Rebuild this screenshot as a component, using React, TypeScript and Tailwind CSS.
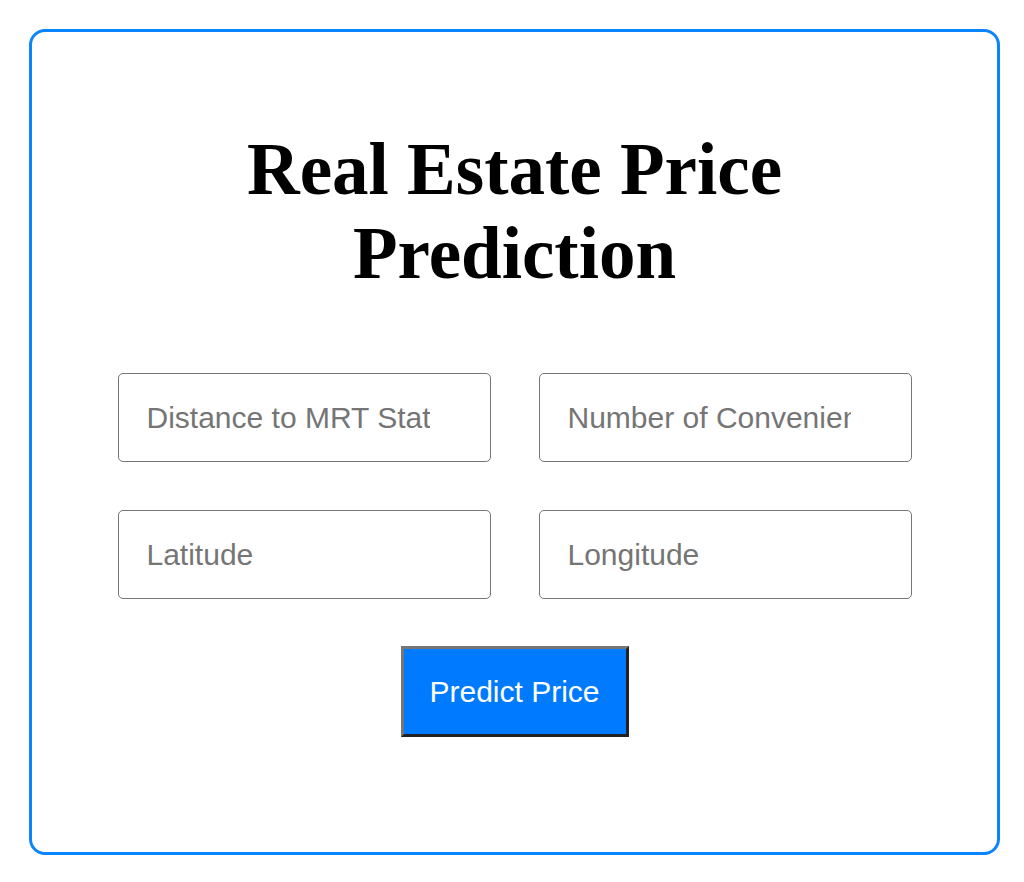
export default function App() {
    return (
        <div className="bg-white min-h-[882px] pt-[29px] pl-[29px]">
            <div className="w-[971px] h-[826px] border-[3px] border-[#0a84ff] rounded-[16px] flex flex-col items-center pt-[96px]">
                <h1 className="font-['Liberation_Serif',serif] font-bold text-[73px] leading-[84px] text-black text-center w-[600px]">
                    Real Estate Price Prediction
                </h1>
                <div className="grid grid-cols-2 gap-x-[48px] gap-y-[48px] mt-[77px]">
                    <input
                        type="text"
                        placeholder="Distance to MRT Station"
                        className="w-[373px] h-[89px] pl-[28px] pr-[60px] border border-[#767676] rounded-[5px] font-['Liberation_Sans',Arial,sans-serif] text-[30px] text-black placeholder:text-[#757575] outline-none"
                    />
                    <input
                        type="text"
                        placeholder="Number of Convenience Stores"
                        className="w-[373px] h-[89px] pl-[28px] pr-[60px] border border-[#767676] rounded-[5px] font-['Liberation_Sans',Arial,sans-serif] text-[30px] text-black placeholder:text-[#757575] outline-none"
                    />
                    <input
                        type="text"
                        placeholder="Latitude"
                        className="w-[373px] h-[89px] pl-[28px] pr-[60px] border border-[#767676] rounded-[5px] font-['Liberation_Sans',Arial,sans-serif] text-[30px] text-black placeholder:text-[#757575] outline-none"
                    />
                    <input
                        type="text"
                        placeholder="Longitude"
                        className="w-[373px] h-[89px] pl-[28px] pr-[60px] border border-[#767676] rounded-[5px] font-['Liberation_Sans',Arial,sans-serif] text-[30px] text-black placeholder:text-[#757575] outline-none"
                    />
                </div>
                <button
                    type="button"
                    className="mt-[47px] w-[228px] h-[91px] bg-[#007bff] text-white font-['Liberation_Sans',Arial,sans-serif] text-[30px] border-[3px] border-t-[#767676] border-l-[#767676] border-b-[#222222] border-r-[#222222]"
                >
                    Predict Price
                </button>
            </div>
        </div>
    )
}
